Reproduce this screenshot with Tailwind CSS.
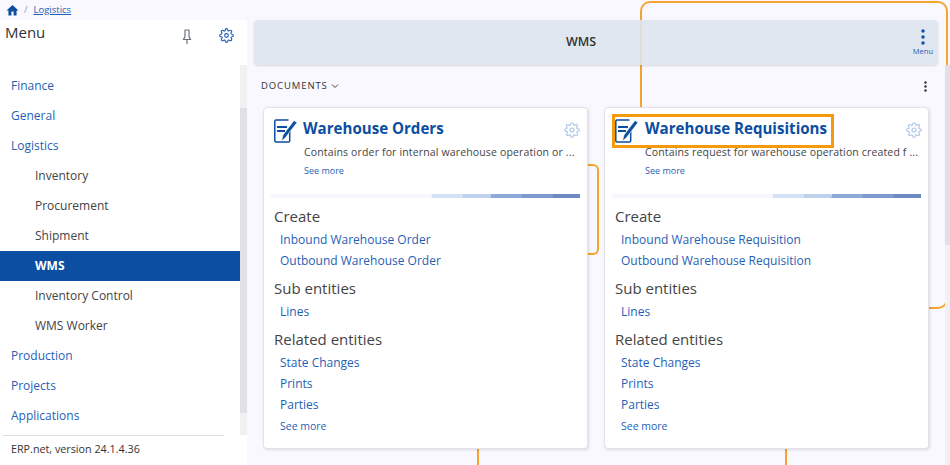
<!DOCTYPE html>
<html lang="en">
<head>
  <meta charset="UTF-8" />
  <title>WMS</title>
  <script src="https://cdn.jsdelivr.net/npm/@tailwindcss/browser@4"></script>
</head>
<body class="bg-[#f8f8fe] font-['Open_Sans',sans-serif] text-[#333]">
<div class="relative w-[950px] h-[465px] overflow-hidden flex flex-col">

  <!-- Connector lines -->
  <div class="absolute left-[640px] top-[1px] w-[308px] h-[308px] border-2 border-[#f5a52f] rounded-[10px]"></div>
  <div class="absolute left-[588px] top-[164px] w-[11px] h-[91px] border-2 border-l-0 border-[#f5a52f] rounded-r-[6px]"></div>
  <div class="absolute left-[477px] top-[449px] w-[2px] h-[16px] bg-[#f5a52f]"></div>
  <div class="absolute left-[785px] top-[449px] w-[2px] h-[16px] bg-[#f5a52f]"></div>

  <!-- Breadcrumb -->
  <div class="relative h-[20px] flex items-center pl-[6px] text-[9.5px]">
    <svg class="w-[13px] h-[13px] text-[#0b4ea2]" viewBox="0 0 24 24" fill="currentColor"><path d="M10 21v-7h4v7h5.5v-9H23L12 2 1 12h3.5v9z"/></svg>
    <span class="ml-[5px] text-gray-400">/</span>
    <a class="ml-[6px] text-[#1f5fb5] underline">Logistics</a>
  </div>

  <div class="relative flex flex-1 min-h-0">
    <!-- Sidebar -->
    <aside class="w-[247px] bg-white flex flex-col relative">
      <div class="h-[45px] flex items-start pl-[5px]">
        <span class="text-[15px] leading-[24px]">Menu</span>
        <svg class="ml-auto mt-[9px] w-[14px] h-[16px] text-gray-500" viewBox="0 0 14 16" fill="none" stroke="currentColor" stroke-width="1.2"><path d="M4.500 1h5M5 1v6.500L3.500 10.500h7L9 7.500V1M7 10.500V15"/></svg>
        <svg class="ml-[25px] mr-[13px] mt-[8px] w-[15px] h-[15px] text-[#1f5fb5]" viewBox="0 0 24 24" fill="none" stroke="currentColor" stroke-width="1.8"><circle cx="12" cy="12" r="3"/><path d="M19.4 15a1.65 1.65 0 0 0 .33 1.82l.06.06a2 2 0 1 1-2.83 2.83l-.06-.06a1.65 1.65 0 0 0-2.82 1.17V21a2 2 0 1 1-4 0v-.09a1.65 1.65 0 0 0-2.82-1.12l-.06.06a2 2 0 1 1-2.83-2.83l.06-.06A1.65 1.65 0 0 0 3.09 14H3a2 2 0 1 1 0-4h.09a1.65 1.65 0 0 0 1.12-2.82l-.06-.06a2 2 0 1 1 2.83-2.83l.06.06A1.65 1.65 0 0 0 10 3.09V3a2 2 0 1 1 4 0v.09a1.65 1.65 0 0 0 2.82 1.12l.06-.06a2 2 0 1 1 2.83 2.83l-.06.06A1.65 1.65 0 0 0 20.91 10H21a2 2 0 1 1 0 4h-.09a1.65 1.65 0 0 0-1.51 1z"/></svg>
      </div>
      <div class="flex flex-1 min-h-0">
        <nav class="w-[240px] pt-[6px] text-[12px] text-[#1f5fb5]">
          <div class="h-[30px] flex items-center pl-[11px]">Finance</div>
          <div class="h-[30px] flex items-center pl-[11px]">General</div>
          <div class="h-[30px] flex items-center pl-[11px]">Logistics</div>
          <div class="h-[30px] flex items-center pl-[35px] text-[#444]">Inventory</div>
          <div class="h-[30px] flex items-center pl-[35px] text-[#444]">Procurement</div>
          <div class="h-[30px] flex items-center pl-[35px] text-[#444]">Shipment</div>
          <div class="h-[30px] flex items-center pl-[35px] bg-[#0b4ea2] text-white font-bold">WMS</div>
          <div class="h-[30px] flex items-center pl-[35px] text-[#444]">Inventory Control</div>
          <div class="h-[30px] flex items-center pl-[35px] text-[#444]">WMS Worker</div>
          <div class="h-[30px] flex items-center pl-[11px]">Production</div>
          <div class="h-[30px] flex items-center pl-[11px]">Projects</div>
          <div class="h-[30px] flex items-center pl-[11px]">Applications</div>
        </nav>
        <div class="w-[7px] h-[370px] bg-[#f1f1f4] pt-[43px]">
          <div class="h-[305px] bg-[#e0e0e6]"></div>
        </div>
      </div>
      <div class="absolute left-[3px] w-[221px] bottom-[29px] border-t border-[#ddd]"></div>
      <div class="absolute left-[11px] bottom-[9px] text-[10.75px] leading-[14px]">ERP.net, version 24.1.4.36</div>
    </aside>

    <!-- Main -->
    <main class="flex-1 min-w-0 pl-[7px] pr-[12px] relative">
      <div class="relative h-[45px] rounded-[4px] bg-[#dee4ee]/90 shadow-sm flex items-center justify-center pr-[30px] text-[12.5px] font-semibold">
        WMS
        <div class="absolute right-[5px] top-[9px] flex flex-col items-center text-[#1f5fb5]">
          <svg class="w-[4px] h-[16px]" viewBox="0 0 4 16" fill="#0b4ea2"><circle cx="2" cy="2" r="1.7"/><circle cx="2" cy="8" r="1.7"/><circle cx="2" cy="14" r="1.7"/></svg>
          <span class="text-[7.5px] leading-[12px] font-normal">Menu</span>
        </div>
      </div>
      <div class="h-[42px] flex items-center pl-[7px] pr-[11px] text-[9.5px] tracking-[0.9px]">
        DOCUMENTS
        <svg class="ml-[3px] w-[8px] h-[8px]" viewBox="0 0 8 8" fill="none" stroke="#444"><path d="M1 2.500l3 3 3-3"/></svg>
        <svg class="ml-auto w-[3px] h-[11px]" viewBox="0 0 3 11" fill="#333"><circle cx="1.500" cy="1.500" r="1.200"/><circle cx="1.500" cy="5.500" r="1.200"/><circle cx="1.500" cy="9.500" r="1.200"/></svg>
      </div>
      <div class="flex pl-[9px] gap-[16px]">

        <!-- Warehouse Orders card -->
        <section class="relative shrink-0 w-[325px] h-[342px] bg-white rounded-[4px] border border-[#e2e2e8] shadow-[1px_1px_3px_rgba(0,0,0,.12)]">
          <svg class="absolute left-[10px] top-[11px] w-[24px] h-[24px] text-[#0b4ea2]" viewBox="0 0 24 24" fill="none" stroke="currentColor" stroke-width="1.500"><path d="M14.500 1H2A1.200 1.200 0 0 0 .8 2.200V21.800A1.200 1.200 0 0 0 2 23H14.500A1.200 1.200 0 0 0 15.700 21.800V12"/><path d="M3 8h10" stroke-width="2"/><path d="M3 12h8" stroke-width="2"/><path d="M7.500 22l1.500-6L20 1.500l3 2L11.500 18.500z" fill="currentColor" stroke="white" stroke-width=".6"/></svg>
          <h2 class="absolute left-[39px] top-[8px] text-[15.1px] leading-[24px] font-bold text-[#0b4ea2]">Warehouse Orders</h2>
          <svg class="absolute right-[7px] top-[14px] w-[16px] h-[16px] text-[#a9c3e6]" viewBox="0 0 24 24" fill="none" stroke="currentColor" stroke-width="1.6"><circle cx="12" cy="12" r="3"/><path d="M19.4 15a1.65 1.65 0 0 0 .33 1.82l.06.06a2 2 0 1 1-2.83 2.83l-.06-.06a1.65 1.65 0 0 0-2.82 1.17V21a2 2 0 1 1-4 0v-.09a1.65 1.65 0 0 0-2.82-1.12l-.06.06a2 2 0 1 1-2.83-2.83l.06-.06A1.65 1.65 0 0 0 3.09 14H3a2 2 0 1 1 0-4h.09a1.65 1.65 0 0 0 1.12-2.82l-.06-.06a2 2 0 1 1 2.83-2.83l.06.06A1.65 1.65 0 0 0 10 3.09V3a2 2 0 1 1 4 0v.09a1.65 1.65 0 0 0 2.82 1.12l.06-.06a2 2 0 1 1 2.83 2.83l-.06.06A1.65 1.65 0 0 0 20.91 10H21a2 2 0 1 1 0 4h-.09a1.65 1.65 0 0 0-1.51 1z"/></svg>
          <p class="absolute left-[40px] top-[36px] text-[10.5px] leading-[16px] tracking-[0.15px] text-[#444] whitespace-nowrap">Contains order for internal warehouse operation or ...</p>
          <a class="absolute left-[40px] top-[56px] text-[9px] leading-[14px] text-[#1f5fb5]">See more</a>
          <div class="absolute left-[7px] top-[86px] w-[309px] h-[4px] bg-[linear-gradient(110deg,#f7f7fd_52%,#d3e2f5_52%,#d3e2f5_62%,#bed2ee_62%,#bed2ee_71%,#8fa9d8_71%,#8fa9d8_81%,#7e9acd_81%,#7e9acd_91%,#6d8bc2_91%)]"></div>
          <div class="absolute left-[10px] top-[98px] text-[15px] leading-[20px] text-[#444]">Create</div>
          <div class="absolute left-[16px] top-[124px] text-[12px] leading-[16px] text-[#1f5fb5]">Inbound Warehouse Order</div>
          <div class="absolute left-[16px] top-[145px] text-[12px] leading-[16px] text-[#1f5fb5]">Outbound Warehouse Order</div>
          <div class="absolute left-[10px] top-[170px] text-[15px] leading-[20px] text-[#444]">Sub entities</div>
          <div class="absolute left-[16px] top-[196px] text-[12px] leading-[16px] text-[#1f5fb5]">Lines</div>
          <div class="absolute left-[10px] top-[221px] text-[15px] leading-[20px] text-[#444]">Related entities</div>
          <div class="absolute left-[16px] top-[247px] text-[12px] leading-[16px] text-[#1f5fb5]">State Changes</div>
          <div class="absolute left-[16px] top-[268px] text-[12px] leading-[16px] text-[#1f5fb5]">Prints</div>
          <div class="absolute left-[16px] top-[289px] text-[12px] leading-[16px] text-[#1f5fb5]">Parties</div>
          <div class="absolute left-[16px] top-[311px] text-[10.5px] leading-[14px] text-[#1f5fb5]">See more</div>
        </section>

        <!-- Warehouse Requisitions card -->
        <section class="relative shrink-0 w-[325px] h-[342px] bg-white rounded-[4px] border border-[#e2e2e8] shadow-[1px_1px_3px_rgba(0,0,0,.12)]">
          <div class="absolute left-[7px] top-[6px] w-[222px] h-[34px] border-[3px] border-[#f59b0b]"></div>
          <svg class="absolute left-[10px] top-[11px] w-[24px] h-[24px] text-[#0b4ea2]" viewBox="0 0 24 24" fill="none" stroke="currentColor" stroke-width="1.500"><path d="M14.500 1H2A1.200 1.200 0 0 0 .8 2.200V21.800A1.200 1.200 0 0 0 2 23H14.500A1.200 1.200 0 0 0 15.700 21.800V12"/><path d="M3 8h10" stroke-width="2"/><path d="M3 12h8" stroke-width="2"/><path d="M7.500 22l1.500-6L20 1.500l3 2L11.500 18.500z" fill="currentColor" stroke="white" stroke-width=".6"/></svg>
          <h2 class="absolute left-[40px] top-[8px] text-[15.1px] leading-[24px] font-bold text-[#0b4ea2]">Warehouse Requisitions</h2>
          <svg class="absolute right-[6px] top-[14px] w-[16px] h-[16px] text-[#a9c3e6]" viewBox="0 0 24 24" fill="none" stroke="currentColor" stroke-width="1.6"><circle cx="12" cy="12" r="3"/><path d="M19.4 15a1.65 1.65 0 0 0 .33 1.82l.06.06a2 2 0 1 1-2.83 2.83l-.06-.06a1.65 1.65 0 0 0-2.82 1.17V21a2 2 0 1 1-4 0v-.09a1.65 1.65 0 0 0-2.82-1.12l-.06.06a2 2 0 1 1-2.83-2.83l.06-.06A1.65 1.65 0 0 0 3.09 14H3a2 2 0 1 1 0-4h.09a1.65 1.65 0 0 0 1.12-2.82l-.06-.06a2 2 0 1 1 2.83-2.83l.06.06A1.65 1.65 0 0 0 10 3.09V3a2 2 0 1 1 4 0v.09a1.65 1.65 0 0 0 2.82 1.12l.06-.06a2 2 0 1 1 2.83 2.83l-.06.06A1.65 1.65 0 0 0 20.91 10H21a2 2 0 1 1 0 4h-.09a1.65 1.65 0 0 0-1.51 1z"/></svg>
          <p class="absolute left-[40px] top-[36px] text-[10.5px] leading-[16px] tracking-[0.15px] text-[#444] whitespace-nowrap">Contains request for warehouse operation created f ...</p>
          <a class="absolute left-[40px] top-[56px] text-[9px] leading-[14px] text-[#1f5fb5]">See more</a>
          <div class="absolute left-[7px] top-[86px] w-[309px] h-[4px] bg-[linear-gradient(110deg,#f7f7fd_52%,#d3e2f5_52%,#d3e2f5_62%,#bed2ee_62%,#bed2ee_71%,#8fa9d8_71%,#8fa9d8_81%,#7e9acd_81%,#7e9acd_91%,#6d8bc2_91%)]"></div>
          <div class="absolute left-[10px] top-[98px] text-[15px] leading-[20px] text-[#444]">Create</div>
          <div class="absolute left-[16px] top-[124px] text-[12px] leading-[16px] text-[#1f5fb5]">Inbound Warehouse Requisition</div>
          <div class="absolute left-[16px] top-[145px] text-[12px] leading-[16px] text-[#1f5fb5]">Outbound Warehouse Requisition</div>
          <div class="absolute left-[10px] top-[170px] text-[15px] leading-[20px] text-[#444]">Sub entities</div>
          <div class="absolute left-[16px] top-[196px] text-[12px] leading-[16px] text-[#1f5fb5]">Lines</div>
          <div class="absolute left-[10px] top-[221px] text-[15px] leading-[20px] text-[#444]">Related entities</div>
          <div class="absolute left-[16px] top-[247px] text-[12px] leading-[16px] text-[#1f5fb5]">State Changes</div>
          <div class="absolute left-[16px] top-[268px] text-[12px] leading-[16px] text-[#1f5fb5]">Prints</div>
          <div class="absolute left-[16px] top-[289px] text-[12px] leading-[16px] text-[#1f5fb5]">Parties</div>
          <div class="absolute left-[16px] top-[311px] text-[10.5px] leading-[14px] text-[#1f5fb5]">See more</div>
        </section>
      </div>
      <!-- Page scrollbar -->
      <div class="absolute right-0 top-[45px] w-[5px] h-[400px] bg-[#f0f0f5]">
        <div class="h-[180px] bg-[#e0e0e6]"></div>
      </div>
    </main>
  </div>
</div>
</body>
</html>
